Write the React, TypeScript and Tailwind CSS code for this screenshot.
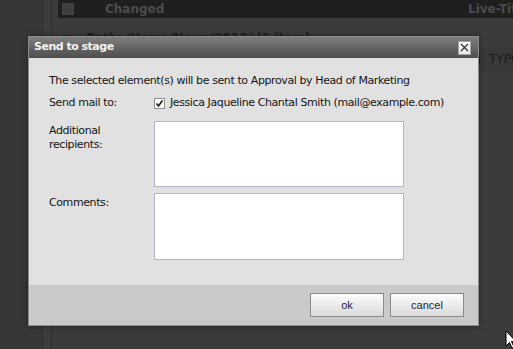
import React from 'react';

const sans = { fontFamily: '"DejaVu Sans", Verdana, sans-serif' };

function Background() {
  return (
    <div className="flex h-full w-full">
      <div className="w-[42px] shrink-0 bg-[#373737]" />
      <div className="w-[10px] shrink-0 bg-[#3c3c3c] border-x border-[#2e2e2e]" />
      <div className="flex-1 min-w-0 flex flex-col pl-[6px] bg-[#3b3b3b]" style={sans}>
        {/* list header */}
        <div className="h-[18px] shrink-0 bg-[#1f1f1f] grid grid-cols-[410px_1fr] items-center text-[12px] font-bold text-[#4c4c4c] whitespace-nowrap overflow-hidden">
          <div className="flex items-center">
            <div className="ml-[4px] w-[12px] h-[12px] bg-[#3e3e3e] border border-[#444]" />
            <span className="ml-[31px]">Changed</span>
          </div>
          <span>Live-Title</span>
        </div>
        {/* group row */}
        <div className="mt-[11px] flex items-center text-[12px] font-bold text-[#1d1d1d] whitespace-nowrap">
          <span className="ml-[5px] text-[9px] leading-none">▼</span>
          <span className="ml-[16px]">Path: /Home/News/2013/ (1 item)</span>
        </div>
        {/* element row */}
        <div className="mt-[1px] h-[22px] bg-[#383838] grid grid-cols-[410px_1fr] items-center whitespace-nowrap overflow-hidden">
          <div />
          <div className="flex items-center gap-[9px] pl-[7px] text-[12px] text-[#1c1c1c]">
            <svg width="5" height="10" viewBox="0 0 5 10">
              <rect x="0.5" y="0.5" width="4" height="9" fill="none" stroke="#1c1c1c" />
              <line x1="1.5" y1="3" x2="3.5" y2="3" stroke="#1c1c1c" />
              <line x1="1.5" y1="5" x2="3.5" y2="5" stroke="#1c1c1c" />
              <line x1="1.5" y1="7" x2="3.5" y2="7" stroke="#1c1c1c" />
            </svg>
            <span>TYPO3</span>
          </div>
        </div>
      </div>
    </div>
  );
}

function Button({ label }: { label: string }) {
  return (
    <button
      className="w-[74px] h-[24px] border border-[#8b8b8b] bg-gradient-to-b from-[#fdfdfd] to-[#d9d9d9] text-[11px] text-[#1b2546]"
      style={{ fontFamily: '"Liberation Sans", Arial, sans-serif' }}
    >
      {label}
    </button>
  );
}

function Dialog() {
  return (
    <div
      className="absolute left-[28px] top-[36px] w-[451px] h-[290px] flex flex-col border border-[#8d8d8d] shadow-[0_0_6px_rgba(0,0,0,0.4)]"
      style={sans}
    >
      <div className="h-[21px] shrink-0 flex items-center justify-between pl-[5px] pr-[7px] bg-gradient-to-b from-[#7e7e7e] to-[#4e4e4e]">
        <span className="text-[11px] font-bold tracking-[-0.5px] text-[#f3f3f3]">Send to stage</span>
        <div className="w-[13px] h-[14px] flex items-center justify-center border border-[#a4a4a4] bg-gradient-to-b from-[#ffffff] to-[#e4e4e4]">
          <svg width="9" height="9" viewBox="0 0 9 9">
            <path d="M1 1L8 8M8 1L1 8" stroke="#333" strokeWidth="1.2" />
          </svg>
        </div>
      </div>

      <div className="flex-1 bg-[#e1e1e1] pl-[20px] pt-[16px] text-[11px] leading-[14px] tracking-[-0.4px] text-[#141414]">
        <p>The selected element(s) will be sent to Approval by Head of Marketing</p>

        <div className="mt-[8px] grid grid-cols-[105px_250px] gap-y-[6px]">
          <span>Send mail to:</span>
          <label className="flex items-center gap-[5px] whitespace-nowrap">
            <svg width="11" height="11" viewBox="0 0 11 11" className="shrink-0">
              <rect x="0.5" y="0.5" width="10" height="10" fill="#fff" stroke="#8e8f8f" />
              <path d="M2.5 5.5L4.5 8L8.5 2.5" fill="none" stroke="#1a1a1a" strokeWidth="1.6" />
            </svg>
            <span>Jessica Jaqueline Chantal Smith (mail@example.com)</span>
          </label>

          <span className="mt-[5px] pt-[3px]">
            Additional
            <br />
            recipients:
          </span>
          <textarea className="mt-[5px] h-[66px] border border-[#b3b6c8] bg-white resize-none" />

          <span className="pt-[3px]">Comments:</span>
          <textarea className="h-[67px] border border-[#b3b6c8] bg-white resize-none" />
        </div>
      </div>

      <div className="h-[40px] shrink-0 bg-[#cacaca] flex items-center justify-end gap-[6px] pr-[14px]">
        <Button label="ok" />
        <Button label="cancel" />
      </div>
    </div>
  );
}

export default function App() {
  return (
    <div className="relative w-[513px] h-[349px] overflow-hidden bg-[#393939]">
      <Background />
      <Dialog />
      <svg className="absolute left-[505px] top-[330px]" width="12" height="19" viewBox="0 0 12 19">
        <path d="M1 1L1 16L4.5 12.5L7 18L9 17L6.5 11.5L11 11.5Z" fill="#fff" stroke="#000" strokeWidth="1" />
      </svg>
    </div>
  );
}
